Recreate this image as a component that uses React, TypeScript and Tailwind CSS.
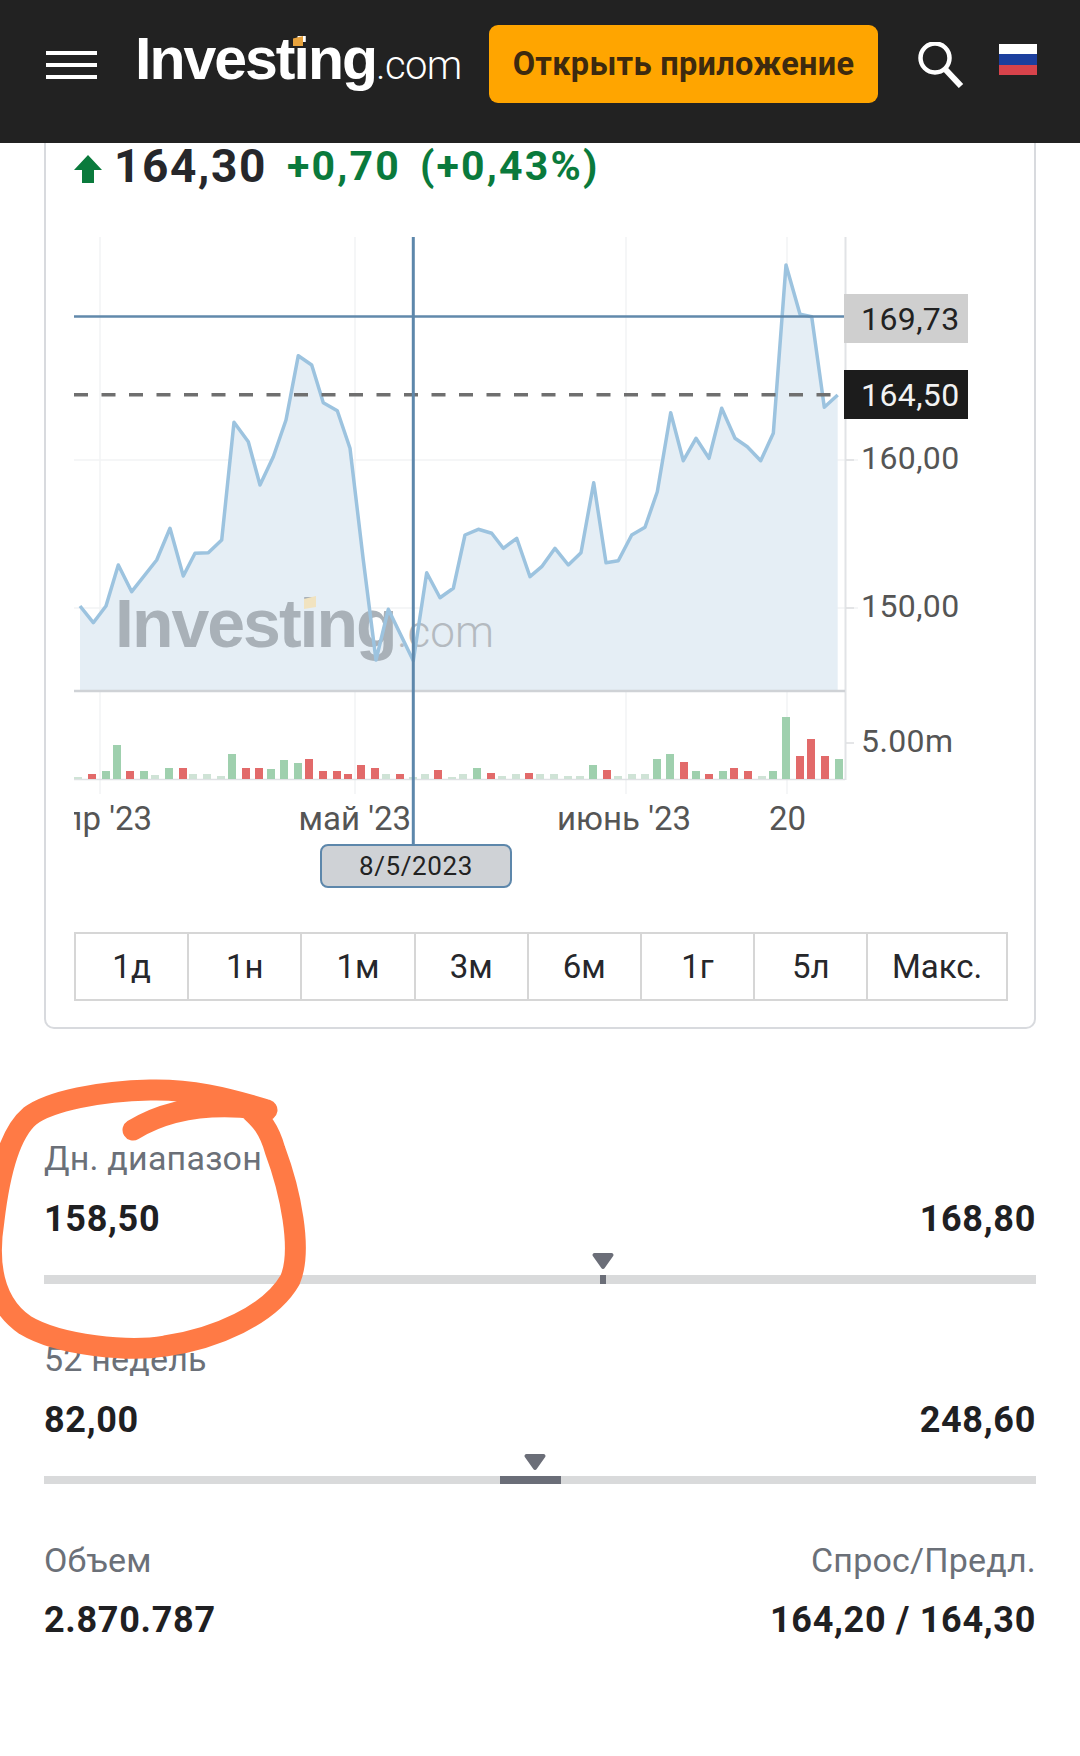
import React from 'react';

const sans = 'font-[Roboto,"Liberation_Sans",sans-serif]';

const LINE = [
  [80, 606], [93.3, 622.7], [106, 606], [118.3, 565], [131.7, 591.7], [156.7, 560], [170, 528.3], [183.3, 576],
  [195, 553.3], [208.3, 552.7], [221.7, 540], [234, 422.3], [248.3, 441.7], [260, 485], [273.3, 456.7], [286, 420],
  [298.3, 355.7], [311.7, 365], [323.3, 402.7], [337.3, 410.7], [350, 448.3], [363.3, 560], [376, 660], [388.3, 609.3],
  [413.3, 660.7], [426.7, 572.7], [440, 597.7], [453.3, 588.3], [465, 535], [478.3, 529.3], [491.7, 533.3], [503.3, 548.3],
  [516.7, 538.3], [530, 576.7], [541.7, 566.7], [555, 548.3], [568.3, 565], [581, 552.7], [593.7, 482.7], [606, 562.7],
  [618.3, 560.7], [631.7, 535], [645, 527.3], [657.3, 491.7], [670.7, 412.7], [683.3, 460.7], [696, 438.3], [709, 458.3],
  [721.7, 408.3], [735, 438.3], [747.3, 446.7], [760.7, 460.7], [773.3, 433.3], [786, 265], [800, 314.3], [811.7, 316.7],
  [824.3, 407.3], [837.7, 395],
];

// x, height, colour: g green, r red, f faint
const VOLUME: [number, number, string][] = [
  [78, 2, 'f'], [92, 5, 'r'], [106, 8, 'g'], [117, 34, 'g'], [130, 8, 'r'], [144, 8, 'g'], [155, 4, 'f'], [169, 11, 'g'],
  [183, 11, 'r'], [193, 5, 'f'], [207, 5, 'f'], [221, 3, 'f'], [232, 25, 'g'], [246, 11, 'r'], [259, 11, 'r'], [271, 10, 'g'],
  [284, 19, 'g'], [298, 16, 'g'], [309, 20, 'r'], [323, 8, 'r'], [337, 8, 'r'], [348, 5, 'r'], [361, 14, 'r'], [375, 11, 'r'],
  [386, 5, 'f'], [400, 5, 'r'], [413, 2, 'f'], [425, 5, 'f'], [438, 9, 'r'], [452, 2, 'f'], [463, 5, 'f'], [477, 11, 'g'],
  [491, 6, 'r'], [502, 3, 'f'], [516, 5, 'f'], [529, 6, 'r'], [540, 5, 'f'], [554, 5, 'f'], [568, 3, 'f'], [580, 3, 'f'],
  [593, 14, 'g'], [607, 9, 'r'], [618, 3, 'f'], [632, 5, 'f'], [645, 5, 'f'], [657, 20, 'g'], [670, 25, 'g'], [684, 17, 'r'],
  [696, 8, 'g'], [709, 5, 'r'], [723, 8, 'g'], [734, 11, 'r'], [748, 8, 'r'], [762, 3, 'f'], [773, 8, 'g'], [786, 62, 'g'],
  [800, 23, 'r'], [811, 40, 'r'], [825, 23, 'r'], [839, 20, 'g'],
];
const VOL_COLORS: Record<string, string> = { g: '#9fd0ae', r: '#e26a6a', f: '#cfe3d6' };

const RANGES = ['1д', '1н', '1м', '3м', '6м', '1г', '5л'];

const linePoints = LINE.map(p => p.join(',')).join(' ');
const areaPoints = `80,691 ${linePoints} 837.7,691`;

const Chart: React.FC = () => (
  <svg viewBox="74 237 900 653" width={900} height={653} className="block" fontFamily="Roboto, sans-serif">
    <defs>
      <clipPath id="plot">
        <rect x={74} y={237} width={900} height={653} />
      </clipPath>
    </defs>
    {[100, 355, 626, 787].map(x => (
      <line key={x} x1={x} x2={x} y1={237} y2={794} stroke="#f2f3f4" strokeWidth={1.5} />
    ))}
    {[460, 608].map(y => (
      <line key={y} x1={74} x2={858} y1={y} y2={y} stroke="#f2f3f4" strokeWidth={1.5} />
    ))}
    <line x1={845.5} x2={845.5} y1={237} y2={780} stroke="#e1e3e6" strokeWidth={2} />
    <polygon points={areaPoints} fill="#e5eef5" />

    <text x={115} y={647} fontSize={68} fontWeight={700} letterSpacing={-2} fontFamily="Liberation Sans, sans-serif" fill="#a9b1b8">Investing</text>
    <text x={397} y={647} fontSize={44} fontWeight={300} fill="#b4bac0">.com</text>
    <polygon points="304,599 316,596 316,607 304,609" fill="#f1e3c0" />

    <polyline points={linePoints} fill="none" stroke="#9cc3df" strokeWidth={3.5} strokeLinejoin="round" />
    <line x1={74} x2={845} y1={691} y2={691} stroke="#cfd2d6" strokeWidth={2.5} />
    <line x1={74} x2={845} y1={316.5} y2={316.5} stroke="#6189ab" strokeWidth={2.5} />
    <line x1={74} x2={845} y1={394.7} y2={394.7} stroke="#6f6f6f" strokeWidth={3.5} strokeDasharray="14 13.5" />
    <line x1={74} x2={845} y1={779.5} y2={779.5} stroke="#dfe1e4" strokeWidth={1.5} />

    {VOLUME.map(([x, h, c]) => (
      <rect key={x} x={x - 4} y={779 - h} width={8} height={h} fill={VOL_COLORS[c]} />
    ))}

    <line x1={413.3} x2={413.3} y1={237} y2={845} stroke="#5d87ab" strokeWidth={3} />

    <rect x={844} y={294} width={124} height={49} fill="#cfcfcf" />
    <text x={861} y={330} fontSize={32} letterSpacing={0.4} fill="#222">169,73</text>
    <rect x={844} y={370} width={124} height={49} fill="#1c1c1c" />
    <text x={861} y={406} fontSize={32} letterSpacing={0.4} fill="#f2f2f2">164,50</text>
    <text x={861} y={469} fontSize={32} letterSpacing={0.4} fill="#555">160,00</text>
    <text x={861} y={617} fontSize={32} letterSpacing={0.4} fill="#555">150,00</text>
    <text x={861} y={752} fontSize={32} letterSpacing={0.4} fill="#555">5.00m</text>
    <line x1={846} x2={854} y1={460} y2={460} stroke="#dcdee1" strokeWidth={1.5} />
    <line x1={846} x2={854} y1={608} y2={608} stroke="#dcdee1" strokeWidth={1.5} />
    <line x1={846} x2={854} y1={743} y2={743} stroke="#dcdee1" strokeWidth={1.5} />

    <g clipPath="url(#plot)" fontSize={33} fill="#555">
      <text x={152} y={830} textAnchor="end">апр '23</text>
      <text x={411} y={830} textAnchor="end">май '23</text>
      <text x={691} y={830} textAnchor="end">июнь '23</text>
      <text x={806} y={830} textAnchor="end">20</text>
    </g>

    <rect x={321} y={845} width={190} height={42} rx={7} fill="#cfd2d6" stroke="#5d87ab" strokeWidth={2} />
    <text x={416} y={875} fontSize={26} fill="#222" textAnchor="middle" letterSpacing={0.6}>8/5/2023</text>
  </svg>
);

const RangeTrack: React.FC<{ thumbLeft: number; barLeft: number; barWidth: number; thick: string }> = ({ thumbLeft, barLeft, barWidth, thick }) => (
  <div className={`relative bg-[#d9dadb] ${thick}`}>
    <div className="absolute inset-y-0 bg-[#6b6e78]" style={{ left: barLeft, width: barWidth }} />
    <svg className="absolute bottom-[calc(100%+6px)]" style={{ left: thumbLeft }} width={22} height={16} viewBox="0 0 22 16">
      <path d="M2.5 0h17a2 2 0 0 1 1.7 3L12.5 15.2a1.8 1.8 0 0 1-3 0L.8 3A2 2 0 0 1 2.5 0z" fill="#6b6e78" />
    </svg>
  </div>
);

const StatHead: React.FC<{ left: string; right?: string; className?: string }> = ({ left, right, className }) => (
  <div className={`flex justify-between text-[34px] leading-[38px] tracking-[0.2px] text-[#6b7078] ${className ?? ''}`}>
    <span>{left}</span>
    {right && <span>{right}</span>}
  </div>
);

const StatValues: React.FC<{ left: string; right: string; className?: string }> = ({ left, right, className }) => (
  <div className={`flex justify-between text-[36px] leading-[40px] font-bold tracking-[0.7px] text-[#1f2022] ${className ?? ''}`}>
    <span>{left}</span>
    <span>{right}</span>
  </div>
);

export default function App() {
  return (
    <div className={`relative w-[1080px] h-[1756px] overflow-hidden bg-white ${sans}`}>
      <header className="flex items-start h-[143px] bg-[#222222]">
        <div className="flex flex-col gap-[8px] w-[51px] ml-[46px] mt-[51px]">
          <div className="h-[4px] bg-white" />
          <div className="h-[4px] bg-white" />
          <div className="h-[4px] bg-white" />
        </div>
        <div className="relative flex items-baseline ml-[38px] mt-[24px] h-[70px] text-white">
          <span className="font-['Liberation_Sans'] font-bold text-[59px] leading-[70px] tracking-[-2px]">Investing</span>
          <span className="font-light text-[40px] leading-[70px] tracking-[-0.6px]">.com</span>
          <div className="absolute left-[158px] top-[12px] w-[10px] h-[10px] bg-[#e8a33d] [clip-path:polygon(0_25%,100%_0,100%_100%,0_100%)]" />
        </div>
        <div className="flex items-center justify-center w-[389px] h-[78px] ml-auto mt-[25px] rounded-[9px] bg-[#ffa500] text-[#3d2a0f] font-bold text-[32.5px] tracking-[0.3px]">
          Открыть приложение
        </div>
        <svg className="ml-[40px] mt-[42px]" width={46} height={46} viewBox="0 0 46 46" fill="none" stroke="white">
          <circle cx={17} cy={16} r={14.5} strokeWidth={4.5} />
          <path d="M27 27 L43 44" strokeWidth={6} />
        </svg>
        <div className="flex flex-col w-[38px] h-[31px] ml-[35px] mr-[43px] mt-[44px]">
          <div className="flex-1 bg-white" />
          <div className="flex-1 bg-[#1c3f9e]" />
          <div className="flex-1 bg-[#d8434b]" />
        </div>
      </header>

      <main className="px-[44px]">
        <section className="h-[886px] border-x-2 border-b-2 border-[#d8dade] rounded-b-[10px] pl-[28px]">
          <div className="flex items-center h-[46px]">
            <svg width={28} height={28} viewBox="0 0 28 28" className="mt-[6px]">
              <path d="M14 0 L28 15 H20 V28 H8 V15 H0 Z" fill="#0a7a3c" />
            </svg>
            <span className="ml-[12px] text-[46px] leading-[46px] font-bold tracking-[1.6px] text-[#26272b]">164,30</span>
            <span className="ml-[20px] text-[41px] leading-[46px] font-bold tracking-[2.2px] text-[#0a7a3c]">+0,70</span>
            <span className="ml-[19px] text-[41px] leading-[46px] font-bold tracking-[2.2px] text-[#0a7a3c]">(+0,43%)</span>
          </div>
          <div className="mt-[48px]">
            <Chart />
          </div>
          <div className="flex h-[69px] w-[934px] mt-[42px] border-2 border-[#d6d6d6] text-[33px] text-[#26272b]">
            {RANGES.map(r => (
              <div key={r} className="flex items-center justify-center w-[113.2px] border-r-2 border-[#d6d6d6]">{r}</div>
            ))}
            <div className="flex items-center justify-center flex-1">Макс.</div>
          </div>
        </section>

        <StatHead left="Дн. диапазон" className="mt-[110px]" />
        <StatValues left="158,50" right="168,80" className="mt-[22px]" />
        <div className="mt-[36px]">
          <RangeTrack thumbLeft={548} barLeft={556} barWidth={6} thick="h-[9px]" />
        </div>

        <StatHead left="52 недель" className="mt-[56px]" />
        <StatValues left="82,00" right="248,60" className="mt-[22px]" />
        <div className="mt-[36px]">
          <RangeTrack thumbLeft={480} barLeft={456} barWidth={61} thick="h-[8px]" />
        </div>

        <StatHead left="Объем" right="Спрос/Предл." className="mt-[57px]" />
        <StatValues left="2.870.787" right="164,20 / 164,30" className="mt-[21px]" />
      </main>

      {/* hand drawn marker ring on top of the screenshot */}
      <svg className="absolute inset-0 pointer-events-none" width={1080} height={1756} viewBox="0 0 1080 1756" fill="none">
        <path
          d="M133 1130 Q185 1098 267 1110 C225 1097 190 1089 150 1090 C100 1091 50 1101 30 1116 C10 1133 0 1170 -6 1220 C-14 1270 -4 1305 25 1325 C60 1346 130 1352 165 1346 C215 1339 270 1315 290 1280 C303 1250 290 1190 275 1150 C268 1125 258 1118 250 1110"
          stroke="#ff7a45"
          strokeWidth={21}
          strokeLinecap="round"
          strokeLinejoin="round"
        />
      </svg>
    </div>
  );
}
